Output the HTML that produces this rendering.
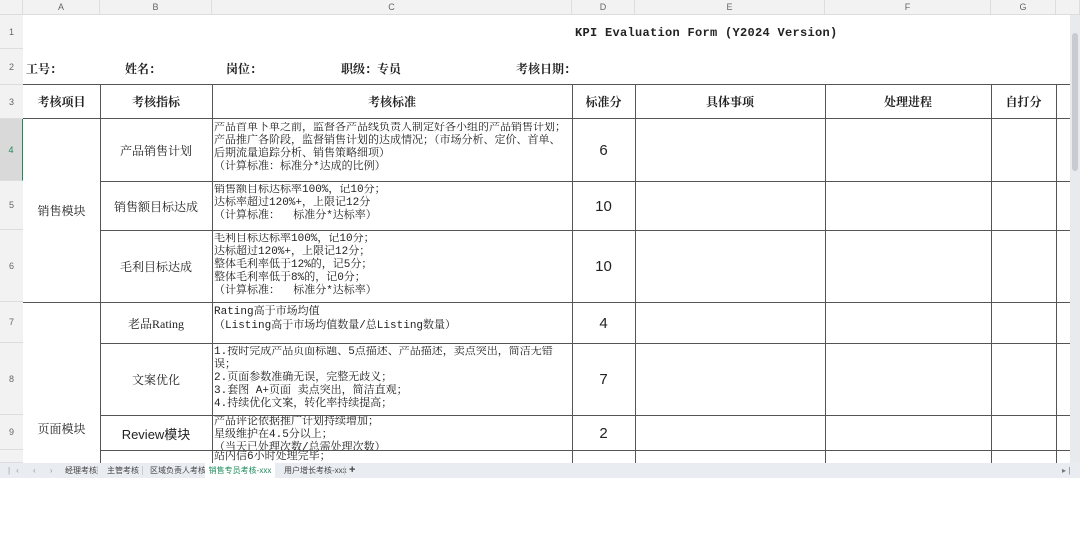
<!DOCTYPE html>
<html><head><meta charset="utf-8"><style>
*{margin:0;padding:0;box-sizing:border-box}
body{width:1080px;height:478px;overflow:hidden;background:#fff;position:relative;font-family:"Liberation Serif","Noto Serif CJK SC",serif;color:#222}
div{position:absolute}
.ch{top:0;height:15px;background:#f2f2f2;border-right:1px solid #ddd;border-bottom:1px solid #ddd;font:9px "Liberation Sans",sans-serif;color:#666;text-align:center;line-height:15px}
.rh{left:0;width:23px;background:#f2f2f2;border-bottom:1px solid #ddd;font:9px "Liberation Sans",sans-serif;color:#666;text-align:center}
.h{background:#555}
.c{display:flex;align-items:center;justify-content:center;text-align:center;font-size:12px}
.t{font-family:"Liberation Mono","Noto Serif CJK SC",monospace;font-size:11px;line-height:13px;white-space:pre;overflow:hidden;left:214px;width:356px}
.n{font:15px "Liberation Sans",sans-serif}
.b{font-weight:bold;font-size:12px}
</style></head><body>
<div class="ch" style="left:0;width:23px"></div>
<div class="ch" style="left:23px;width:77px">A</div>
<div class="ch" style="left:100px;width:112px">B</div>
<div class="ch" style="left:212px;width:360px">C</div>
<div class="ch" style="left:572px;width:63px">D</div>
<div class="ch" style="left:635px;width:190px">E</div>
<div class="ch" style="left:825px;width:166px">F</div>
<div class="ch" style="left:991px;width:65px">G</div>
<div class="ch" style="left:1056px;width:24px"></div>
<div class="rh" style="top:15px;height:34px;line-height:34px">1</div>
<div class="rh" style="top:49px;height:36px;line-height:36px">2</div>
<div class="rh" style="top:85px;height:34px;line-height:34px">3</div>
<div class="rh" style="top:119px;height:62px;line-height:62px;background:#d9d9d9;border-right:1px solid #1e8a5a;color:#1e8a5a">4</div>
<div class="rh" style="top:181px;height:49px;line-height:49px">5</div>
<div class="rh" style="top:230px;height:72px;line-height:72px">6</div>
<div class="rh" style="top:302px;height:41px;line-height:41px">7</div>
<div class="rh" style="top:343px;height:72px;line-height:72px">8</div>
<div class="rh" style="top:415px;height:35px;line-height:35px">9</div>
<div class="rh" style="top:450px;height:13px"></div>

<div style="left:575px;top:26px;font:bold 12px 'Liberation Mono',monospace;letter-spacing:0.3px">KPI Evaluation Form (Y2024 Version)</div>
<div class="b" style="left:26px;top:60px">工号：</div>
<div class="b" style="left:125px;top:60px">姓名：</div>
<div class="b" style="left:226px;top:60px">岗位：</div>
<div class="b" style="left:341px;top:60px">职级：专员</div>
<div class="b" style="left:516px;top:60px">考核日期：</div>

<div class="h" style="left:23px;top:84px;width:1047px;height:1px"></div>
<div class="h" style="left:23px;top:118px;width:1047px;height:1px"></div>
<div class="h" style="left:100px;top:181px;width:970px;height:1px"></div>
<div class="h" style="left:100px;top:230px;width:970px;height:1px"></div>
<div class="h" style="left:23px;top:302px;width:1047px;height:1px"></div>
<div class="h" style="left:100px;top:343px;width:970px;height:1px"></div>
<div class="h" style="left:100px;top:415px;width:970px;height:1px"></div>
<div class="h" style="left:100px;top:450px;width:970px;height:1px"></div>
<div class="h" style="left:100px;top:84px;width:1px;height:379px"></div>
<div class="h" style="left:212px;top:84px;width:1px;height:379px"></div>
<div class="h" style="left:572px;top:84px;width:1px;height:379px"></div>
<div class="h" style="left:635px;top:84px;width:1px;height:379px"></div>
<div class="h" style="left:825px;top:84px;width:1px;height:379px"></div>
<div class="h" style="left:991px;top:84px;width:1px;height:379px"></div>
<div class="h" style="left:1056px;top:84px;width:1px;height:379px"></div>

<div class="c b" style="left:23px;top:85px;width:77px;height:33px">考核项目</div>
<div class="c b" style="left:100px;top:85px;width:112px;height:33px">考核指标</div>
<div class="c b" style="left:212px;top:85px;width:360px;height:33px">考核标准</div>
<div class="c b" style="left:572px;top:85px;width:63px;height:33px">标准分</div>
<div class="c b" style="left:635px;top:85px;width:190px;height:33px">具体事项</div>
<div class="c b" style="left:825px;top:85px;width:166px;height:33px">处理进程</div>
<div class="c b" style="left:991px;top:85px;width:65px;height:33px">自打分</div>

<div class="c" style="left:23px;top:119px;width:77px;height:183px">销售模块</div>
<div class="c" style="left:23px;top:303px;width:77px;height:250px">页面模块</div>
<div class="c" style="left:100px;top:119px;width:112px;height:62px">产品销售计划</div>
<div class="c" style="left:100px;top:182px;width:112px;height:48px">销售额目标达成</div>
<div class="c" style="left:100px;top:231px;width:112px;height:71px">毛利目标达成</div>
<div class="c" style="left:100px;top:303px;width:112px;height:40px">老品Rating</div>
<div class="c" style="left:100px;top:344px;width:112px;height:71px">文案优化</div>
<div class="c" style="left:100px;top:416px;width:112px;height:34px;font-family:'Liberation Sans','Noto Sans CJK SC',sans-serif;font-size:13px">Review模块</div>

<div class="t" style="top:122px;height:59px">产品首单下单之前，监督各产品线负责人制定好各小组的产品销售计划；
产品推广各阶段，监督销售计划的达成情况；（市场分析、定价、首单、
后期流量追踪分析、销售策略细项）
（计算标准：标准分*达成的比例）</div>
<div class="t" style="top:184px;height:46px">销售额目标达标率100%，记10分；
达标率超过120%+，上限记12分
（计算标准：  标准分*达标率）</div>
<div class="t" style="top:233px;height:69px">毛利目标达标率100%，记10分；
达标超过120%+，上限记12分；
整体毛利率低于12%的，记5分；
整体毛利率低于8%的，记0分；
（计算标准：  标准分*达标率）</div>
<div class="t" style="top:305px;height:38px;line-height:14px">Rating高于市场均值
（Listing高于市场均值数量/总Listing数量）</div>
<div class="t" style="top:346px;height:69px">1.按时完成产品页面标题、5点描述、产品描述，卖点突出，简洁无错
误；
2.页面参数准确无误，完整无歧义；
3.套图 A+页面 卖点突出，简洁直观；
4.持续优化文案，转化率持续提高；</div>
<div class="t" style="top:416px;height:34px">产品评论依据推广计划持续增加；
星级维护在4.5分以上；
（当天已处理次数/总需处理次数）</div>
<div class="t" style="top:451px;height:12px;line-height:12px">站内信6小时处理完毕；</div>

<div class="c n" style="left:572px;top:119px;width:63px;height:62px">6</div>
<div class="c n" style="left:572px;top:182px;width:63px;height:48px">10</div>
<div class="c n" style="left:572px;top:231px;width:63px;height:71px">10</div>
<div class="c n" style="left:572px;top:303px;width:63px;height:40px">4</div>
<div class="c n" style="left:572px;top:344px;width:63px;height:71px">7</div>
<div class="c n" style="left:572px;top:416px;width:63px;height:34px">2</div>

<div style="left:1070px;top:15px;width:10px;height:448px;background:#e8eaee"></div>
<div style="left:1072px;top:33px;width:6px;height:138px;background:#c8ccd2;border-radius:3px"></div>
<div style="left:0;top:463px;width:1080px;height:15px;background:#e9ecf1;font:8px 'Liberation Sans','Noto Sans CJK SC',sans-serif;color:#444;line-height:15px">
<div style="left:8px;color:#999;letter-spacing:6px">|‹ ‹ › ›|</div>
<div style="left:65px">经理考核</div>
<div style="left:97px;width:1px;height:9px;top:3px;background:#ccc"></div>
<div style="left:107px">主管考核</div>
<div style="left:142px;width:1px;height:9px;top:3px;background:#ccc"></div>
<div style="left:150px">区域负责人考核</div>
<div style="left:205px;width:70px;height:15px;background:#fff;color:#1a8a5a;text-align:center">销售专员考核-xxx</div>
<div style="left:284px">用户增长考核-xxx</div>
<div style="left:344px;width:1px;height:9px;top:3px;background:#ccc"></div>
<div style="left:349px;font-size:11px;font-weight:bold">+</div>
<div style="left:1062px;color:#777">▸ |</div>
</div>
</body></html>
